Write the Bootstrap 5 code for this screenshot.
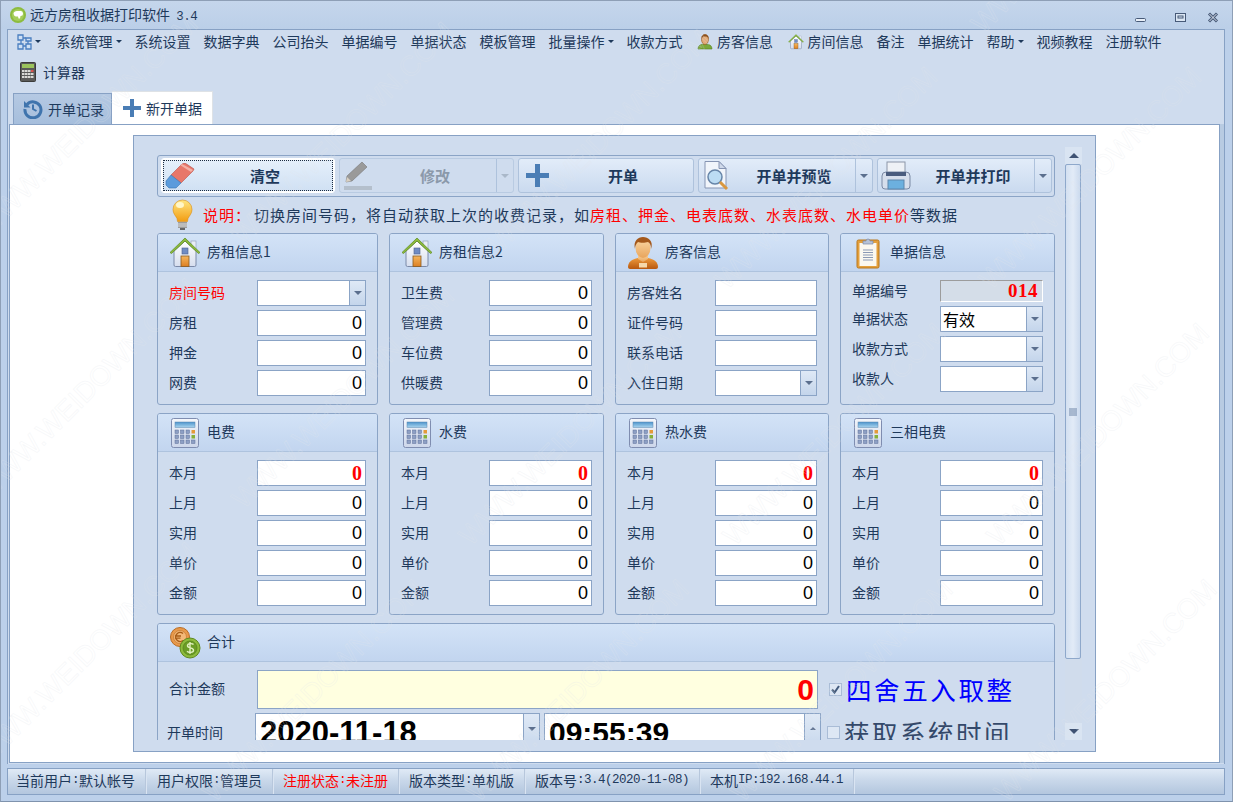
<!DOCTYPE html>
<html lang="zh-CN">
<head>
  <meta charset="UTF-8">
  <title>远方房租收据打印软件 3.4</title>
  <meta name="viewport" content="width=device-width, initial-scale=1">
  <link href="https://cdn.jsdelivr.net/npm/bootstrap@5.3.0/dist/css/bootstrap.min.css" rel="stylesheet">
  <style>
    html, body { margin: 0; height: 100%; overflow: hidden; }
    body { font-family: "Noto Sans CJK SC", "Liberation Sans", sans-serif; font-size: 14px; color: #1e395b; line-height: 1.2; }
    .app-win { position: relative; width: 1233px; height: 802px; overflow: hidden; background: #bcd0ea; border: 1px solid #8e9fb6; border-bottom-color: #7f93ad; }
    .halfw { font-family: "Liberation Mono", monospace; font-size: 12.5px; letter-spacing: -.5px; }

    .title-bar { height: 28px; padding-left: 9px; background: linear-gradient(#c5d6ec, #bbcfe8); }
    .title-bar .ttl { margin-left: 4px; margin-top: 1px; }
    .title-bar .ttl .halfw { margin-left: 3px; }
    .win-btns { margin-left: auto; gap: 21px; padding-right: 13px; padding-top: 5px; }

    .main-frame { margin: 0 7px 0 6px; height: 735px; background: #cfdcee; border: 1px solid #87a1c4; border-bottom: 0; }
    .menu-rows { padding-left: 2px; height: 59px; align-content: flex-start; }
    .menu-it { height: 25px; padding: 0 6.5px 2px; white-space: nowrap; color: #1e395b; text-decoration: none; gap: 4px; }
    .menu-it.with-ico { padding-left: 8px; }
    .menu-it.menu-grid { padding-right: 9.5px; }
    .menu-it.calc-it { height: 32px; margin-top: 2px; padding-left: 10px; gap: 7px; }
    .menu-it.dropdown-toggle { gap: 0; }
    .dropdown-toggle::after { border-width: 3px 3px 0; margin-left: 3px; vertical-align: 2px; border-top-color: #1e395b; }

    .tab-strip { margin: 2px 0 0 5px; height: 33px; border-bottom: 0; align-items: flex-end; }
    .tab-strip .nav-link { display: flex; align-items: center; gap: 5px; color: #1e395b; border: 1px solid #87a1c4; border-bottom: 0; border-radius: 0; margin: 0; padding: 0 0 0 9px; height: 31px; width: 99px; white-space: nowrap; background: linear-gradient(#b5c9e3, #a6bedc); }
    .tab-strip .nav-link.active { height: 33px; width: 101px; background: #fff; border-left: 0; color: #1e395b; padding-left: 11px; position: relative; z-index: 2; }

    .page-area { margin-left: 1px; margin-right: 4px; height: 639px; background: #fff; border: 1px solid #87a1c4; padding: 10px 0 0 123px; box-shadow: 4px 0 0 #b8cbe2; }
    .form-panel { width: 963px; height: 617px; background: #cfdcee; border: 1px solid #87a1c4; }
    .form-view { width: 931px; height: 604px; overflow: hidden; padding: 19px 0 0 23px; }
    .side-scroll { width: 17px; margin-top: 11px; height: 593px; background: #d0dcec; }
    .scroll-end { height: 17px; background: #d9e4f2; }
    .scroll-thumb { height: 495px; width: 16px; border: 1px solid #8ea8cb; border-radius: 2px; background: linear-gradient(90deg, #d3e0f1, #e2ebf7 50%, #cbdaee); }
    .tri-up { width: 0; height: 0; border: 5px solid transparent; border-top: 0; border-bottom: 5px solid #3f5273; }
    .tri-dn { width: 0; height: 0; border: 5px solid transparent; border-bottom: 0; border-top: 5px solid #3f5273; }
    .scroll-fill { flex: 1 1 auto; }

    .tool-row { width: 898px; height: 42px; border: 1px solid #8ba4c6; border-radius: 3px; padding: 2px 2px 0 3px; gap: 4px; }
    .tool-btn { --bs-btn-padding-x: 0; --bs-btn-padding-y: 0; width: 175px; height: 35px; padding: 0; border: 1px solid #aec2dc; border-radius: 3px; background: linear-gradient(#e2ecf9, #cadaef); color: #1e395b; font-size: 15px; font-weight: 700; line-height: 1; }
    .tool-btn.tool-wide { width: 176px; }
    .tool-btn:disabled { background: #cfdcee; border-color: #b9cbe2; color: #8b99aa; opacity: 1; }
    .tool-btn .ico-box { width: 36px; flex: none; display: flex; justify-content: center; align-items: center; }
    .tool-btn .lbl { flex: 1 1 auto; padding-right: 2px; }
    .tool-btn .drop-part { width: 17px; height: 100%; flex: none; border-left: 1px solid #aec2dc; display: flex; align-items: center; justify-content: center; }
    .tool-btn.is-focus { width: 174px; border-color: #fff; box-shadow: inset 0 0 0 1px #fff; position: relative; background: linear-gradient(#e6f0fb, #cfe0f3); }
    .tool-btn.is-focus::before { content: ""; position: absolute; inset: 1px; border: 1px dotted #1c2b40; }
    .tri-sm { width: 0; height: 0; border: 4px solid transparent; border-bottom: 0; border-top: 4px solid #5b6f8e; }
    .tool-btn:disabled .tri-sm { border-top-color: #aab8c9; }

    .hint-row { height: 36px; padding-left: 15px; font-size: 15px; letter-spacing: 1px; }
    .hint-red { color: #f00; }
    .hint-row .hint-lead { margin-left: 10px; width: 51px; }

    .group-grid { display: grid; grid-template-columns: 221px 215px 214px 215px; gap: 8px 11px; width: 898px; }
    .info-box { --bs-card-border-color: #8ba4c6; --bs-card-border-radius: 3px; --bs-card-inner-border-radius: 2px; --bs-card-bg: transparent; --bs-card-spacer-y: 0; --bs-card-spacer-x: 0; --bs-card-cap-padding-y: 0; --bs-card-cap-padding-x: 0; --bs-card-color: #1e395b; }
    .info-box .card-header { flex: none; height: 38px; display: flex; align-items: center; gap: 6px; padding-left: 11px; background: linear-gradient(#d3e3f7, #c2d5ef); border-bottom: 1px solid #aec3de; }
    .info-box .card-header svg { flex: none; }
    .info-box .card-header span { padding-bottom: 2px; }
    .info-box .card-body { padding: 8px 11px 8px 11px; display: flex; flex-direction: column; gap: 4px; }
    .rent-box { height: 172px; }
    .meter-box { height: 202px; }
    .sum-box { grid-column: 1 / -1; height: 140px; }
    .f-row { height: 26px; flex: none; display: flex; align-items: center; }
    .f-lbl { flex: none; white-space: nowrap; padding-bottom: 2px; }
    .lbl-88 { width: 88px; }
    .f-red { color: #f00; }
    .f-input { flex: 1 1 auto; width: 0; min-height: 0; height: 26px; border: 1px solid #8ba4c6; border-radius: 0; background: #fff; padding: 0 3px; color: #000; font-family: "Liberation Sans", sans-serif; font-size: 18px; text-align: right; box-shadow: none; }
    .f-input.num-red { color: #f00; font-family: "Liberation Serif", serif; font-weight: 700; font-size: 20px; }
    .f-input.txt { text-align: left; font-family: "Noto Sans CJK SC", sans-serif; font-size: 16px; padding-left: 2px; }
    .combo { flex: 1 1 auto; width: 0; flex-wrap: nowrap; }
    .combo .f-input { border-right: 0; border-radius: 0 !important; }
    .combo-btn { width: 17px; height: 26px; padding: 0; flex: none; border: 1px solid #8ba4c6; border-radius: 0 !important; background: linear-gradient(#dfe9f6, #c4d5eb); display: flex; align-items: center; justify-content: center; }
    .no-box { height: 22px; margin-bottom: 0; }
    .no-input { flex: 1 1 auto; height: 22px; background: #d4dde8; border: 1px solid #fff; border-top-color: #9c9c9c; border-left-color: #9c9c9c; color: #f00; font-family: "Liberation Serif", serif; font-weight: 700; font-size: 19px; letter-spacing: .5px; line-height: 20px; text-align: right; padding-right: 4px; }

    .sum-body-row { height: 39px; }
    .sum-input { width: 561px; flex: none; height: 39px; background: #ffffe0; color: #f00; font-weight: 700; font-size: 30px; font-family: "Liberation Sans", sans-serif; padding-right: 3px; }
    .sum-lbl { width: 88px; }
    .form-check-input.chk-mark { width: 13px; height: 13px; margin: 0; flex: none; border-radius: 0; border-color: #a9bcd6; background-color: #dde7f4; }
    .form-check-input.chk-mark:checked { background-color: #dde7f4; border-color: #a9bcd6; background-size: 13px; background-image: url("data:image/svg+xml,%3csvg xmlns='http://www.w3.org/2000/svg' viewBox='0 0 13 13'%3e%3cpath fill='none' stroke='%23425a7c' stroke-width='2' d='M3 6.5l2.5 3L10 3'/%3e%3c/svg%3e"); }
    .round-note { margin-left: 11px; gap: 4px; color: #00f; font-size: 25.5px; letter-spacing: 2.6px; white-space: nowrap; }
    .date-row { margin-left: -2px; height: 40px; align-items: flex-start; }
    .date-lbl { width: 88px; margin-top: 11px; }
    .date-box { width: 285px; flex: none; }
    .time-box { width: 277px; flex: none; margin-left: 4px; }
    .date-box .f-input, .time-box .f-input { height: 40px; font-size: 30px; font-weight: 700; text-align: left; padding-left: 4px; line-height: 1; }
    .date-box .f-input { font-size: 31px; }
    .date-box .combo-btn, .time-box .combo-btn { height: 40px; align-items: flex-start; padding-top: 13px; }
    .sys-note { margin-left: 6px; margin-top: 5px; gap: 4px; color: #34496a; font-size: 25.5px; letter-spacing: 2.5px; white-space: nowrap; line-height: 1.1; }
    .spin-up { width: 0; height: 0; border: 3px solid transparent; border-top: 0; border-bottom: 3px solid #5b6f8e; }

    .status-bar { margin: 4px 7px 0 6px; height: 27px; background: linear-gradient(#e0eaf6, #c9d8ea 45%, #b3c6de); border: 1px solid #87a1c4; }
    .st-it { padding: 0 10px 2px 8px; height: 100%; display: flex; align-items: center; white-space: nowrap; border-right: 1px solid #b7c7dc; box-shadow: 1px 0 0 #d9e4f2; margin-right: 2px; }
    .st-it:first-child { margin-right: 3px; }
    .st-it.st-red { color: #f00; }

    .wm-layer { position: absolute; inset: 0; pointer-events: none; overflow: hidden; z-index: 5; }
    .wm-line { position: absolute; white-space: pre; transform-origin: 0 50%; transform: rotate(-45deg); font: 400 28px "Liberation Sans", sans-serif; color: transparent; -webkit-text-stroke: .8px rgba(226,230,236,.28); }
  </style>
</head>
<body>

<svg width="0" height="0" class="position-absolute">
  <defs>
    <linearGradient id="gCalc" x1="0" y1="0" x2="0" y2="1"><stop offset="0" stop-color="#f4f7fc"/><stop offset="1" stop-color="#ccd6ea"/></linearGradient>
    <linearGradient id="gDisp" x1="0" y1="0" x2="0" y2="1"><stop offset="0" stop-color="#4d94cc"/><stop offset="1" stop-color="#a9d4ee"/></linearGradient>
    <linearGradient id="gDoor" x1="0" y1="0" x2="0" y2="1"><stop offset="0" stop-color="#f5b65c"/><stop offset="1" stop-color="#dd7f22"/></linearGradient>
    <linearGradient id="gWall" x1="0" y1="0" x2="0" y2="1"><stop offset="0" stop-color="#fff"/><stop offset="1" stop-color="#d6deee"/></linearGradient>
    <linearGradient id="gBulb" x1="0" y1="0" x2="0" y2="1"><stop offset="0" stop-color="#ffe680"/><stop offset="1" stop-color="#f29c12"/></linearGradient>
    <linearGradient id="gSkin" x1="0" y1="0" x2="0" y2="1"><stop offset="0" stop-color="#fbd9a5"/><stop offset="1" stop-color="#e8a45c"/></linearGradient>
    <linearGradient id="gOrange" x1="0" y1="0" x2="0" y2="1"><stop offset="0" stop-color="#ee9a3c"/><stop offset="1" stop-color="#b8580f"/></linearGradient>

    <symbol id="icHome" viewBox="0 0 32 32">
      <rect x="22" y="4" width="5" height="9" fill="#e8edf6" stroke="#8b9ab6" stroke-width=".6"/>
      <path d="M5 14L16 4l11 10v14a1.5 1.5 0 0 1-1.5 1.5h-19A1.5 1.5 0 0 1 5 28z" fill="url(#gWall)" stroke="#7b8aa8"/>
      <path d="M1 15.5L16 1l15 14.5-1.5 1L16 4 2.500 16.500z" fill="#8dbb3c" stroke="#5c8a1e" stroke-width=".7"/>
      <rect x="13" y="11" width="6" height="6" fill="#6f8cc4" stroke="#4d628e" stroke-width=".6"/>
      <rect x="12" y="19" width="8" height="10.500" fill="url(#gDoor)" stroke="#8a5a1e" stroke-width=".8"/>
    </symbol>
    <symbol id="icPerson" viewBox="0 0 32 32">
      <path d="M1 30c0-5 4-8 10-9h10c6 1 10 4 10 9 0 1-1 2-2 2H3c-1 0-2-1-2-2z" fill="url(#gOrange)"/>
      <path d="M11 17h10v5l-5 3-5-3z" fill="url(#gSkin)"/>
      <ellipse cx="16" cy="11" rx="7.500" ry="10" fill="url(#gSkin)"/>
      <path d="M8 12C6 4 11 0 16 0s11 4 8 12c0-4-1-6-3-7-3 1-8 1-10 0-2 2-3 4-3 7z" fill="#a5591b"/>
      <rect x="12" y="26" width="8" height="4.500" fill="#f6d8aa"/>
    </symbol>
    <symbol id="icClip" viewBox="0 0 24 32">
      <rect x="1" y="3" width="22" height="28" rx="1.500" fill="#e4a03c" stroke="#b9771d"/>
      <rect x="3.500" y="6" width="17" height="23" fill="#fbf8f0"/>
      <path d="M7 13h10M7 15.500h10M7 18h10M7 20.500h10M7 23h10" stroke="#8b99b5" stroke-width="1"/>
      <path d="M7 7V4h3a2 2 0 0 1 4 0h3v3z" fill="#b6c2d8" stroke="#7d8ba6" stroke-width=".7"/>
    </symbol>
    <symbol id="icCalcBlue" viewBox="0 0 28 30">
      <rect x=".5" y=".5" width="27" height="29" rx="2" fill="url(#gCalc)" stroke="#7f8db0"/>
      <rect x="4" y="4" width="20" height="5.500" fill="url(#gDisp)" stroke="#5d87b0" stroke-width=".5"/>
      <g fill="#8d9fc4" stroke="#5f7099" stroke-width=".5">
        <rect x="4" y="12" width="3.500" height="3.500"/><rect x="9.500" y="12" width="3.500" height="3.500"/><rect x="15" y="12" width="3.500" height="3.500"/>
        <rect x="4" y="17" width="3.500" height="3.500"/><rect x="9.500" y="17" width="3.500" height="3.500"/><rect x="15" y="17" width="3.500" height="3.500"/>
        <rect x="4" y="22" width="3.500" height="3.500"/><rect x="9.500" y="22" width="3.500" height="3.500"/><rect x="15" y="22" width="3.500" height="3.500"/><rect x="20.500" y="22" width="3.500" height="3.500"/>
      </g>
      <rect x="20.500" y="12" width="3.500" height="3.500" fill="#e49a3a"/>
      <rect x="20.500" y="17" width="3.500" height="3.500" fill="#86b03a"/>
    </symbol>
    <symbol id="icCoins" viewBox="0 0 32 32">
      <circle cx="11" cy="10" r="9.500" fill="#e8994a" stroke="#b96c24"/>
      <circle cx="11" cy="10" r="6.500" fill="#f3b878" stroke="#c27a34" stroke-width=".7"/>
      <path d="M14 6.500a4.500 4.500 0 1 0 0 7M6 9h6M6 11.200h5.500" fill="none" stroke="#a85c16" stroke-width="1.300"/>
      <circle cx="21" cy="21" r="10" fill="#8dbb3c" stroke="#5f8a1e"/>
      <circle cx="21" cy="21" r="7" fill="#6b9c26" stroke="#55801a" stroke-width=".7"/>
      <path d="M24.500 17.500c-1-1.200-6-1.500-6 1.200s6 1.800 6 4.600-5 2.500-6.500 1M21 15v12" fill="none" stroke="#e3f0c0" stroke-width="1.400"/>
    </symbol>
  </defs>
</svg>

<div class="app-win">
  <div class="title-bar d-flex align-items-center">
    <svg width="16" height="16" viewBox="0 0 16 16"><circle cx="8" cy="8" r="8" fill="#8cbc3f"/><circle cx="8" cy="8" r="6" fill="#a5cd5c"/><path d="M3.500 6.500Q4 4 7 4h4q2 0 2 2.500T10.500 9l-.5 2.500H8.500L8 9.500H6Q4 9.500 3.500 6.500z" fill="#fff"/></svg>
    <span class="ttl">远方房租收据打印软件 <span class="halfw">3.4</span></span>
    <div class="win-btns d-flex align-items-center">
      <svg class="me-2" width="11" height="11" viewBox="0 0 11 11"><rect x=".5" y="6.500" width="10" height="3" rx="1" fill="#e8eff8" stroke="#475a78"/></svg>
      <svg width="11" height="11" viewBox="0 0 11 11"><rect x=".5" y="1.500" width="10" height="8" fill="#dbe6f3" stroke="#475a78"/><rect x="3" y="4" width="5" height="2" fill="none" stroke="#475a78"/></svg>
      <svg width="12" height="11" viewBox="0 0 12 11"><path d="M2 1.500l8 8M10 1.500l-8 8" fill="none" stroke="#475a78" stroke-width="3"/><path d="M2.500 2l7 7M9.500 2l-7 7" stroke="#eef3fa" stroke-width=".9"/></svg>
    </div>
  </div>

  <div class="main-frame">
    <div class="menu-rows d-flex flex-wrap">
      <a class="menu-it menu-grid d-flex align-items-center dropdown-toggle" href="#">
        <svg width="15" height="16" viewBox="0 0 15 16"><path d="M1 1h5v5H1zM1 10h5v5H1zM9 10h5v5H9zM9 4h5v3H9z" fill="#cfe0f4" stroke="#4a7ec0" stroke-width="1.300"/><path d="M6 4h3M4 6v4M6 12h3M11 7v3" stroke="#4a7ec0" stroke-width="1.300"/></svg>
      </a>
      <a class="menu-it d-flex align-items-center dropdown-toggle" href="#">系统管理</a>
      <a class="menu-it d-flex align-items-center" href="#">系统设置</a>
      <a class="menu-it d-flex align-items-center" href="#">数据字典</a>
      <a class="menu-it d-flex align-items-center" href="#">公司抬头</a>
      <a class="menu-it d-flex align-items-center" href="#">单据编号</a>
      <a class="menu-it d-flex align-items-center" href="#">单据状态</a>
      <a class="menu-it d-flex align-items-center" href="#">模板管理</a>
      <a class="menu-it d-flex align-items-center dropdown-toggle" href="#">批量操作</a>
      <a class="menu-it d-flex align-items-center" href="#">收款方式</a>
      <a class="menu-it with-ico d-flex align-items-center" href="#">
        <svg width="16" height="16" viewBox="0 0 16 16"><path d="M1 15c0-3 2-4.500 5-5h4c3 .5 5 2 5 5z" fill="#7aa83a" stroke="#54801e" stroke-width=".6"/><ellipse cx="8" cy="5.500" rx="3.500" ry="5" fill="#e2ab78" stroke="#98602c" stroke-width=".7"/><path d="M4.500 5C4 1 7 .5 8 .5S12 1 11.500 5C11 3 10 2.500 8 2.500S5 3 4.500 5z" fill="#8a4f1c"/></svg>
        <span>房客信息</span>
      </a>
      <a class="menu-it with-ico d-flex align-items-center" href="#">
        <svg width="16" height="16" viewBox="0 0 32 32"><use href="#icHome"/></svg>
        <span>房间信息</span>
      </a>
      <a class="menu-it d-flex align-items-center" href="#">备注</a>
      <a class="menu-it d-flex align-items-center" href="#">单据统计</a>
      <a class="menu-it d-flex align-items-center dropdown-toggle" href="#">帮助</a>
      <a class="menu-it d-flex align-items-center" href="#">视频教程</a>
      <a class="menu-it d-flex align-items-center" href="#">注册软件</a>
      <a class="menu-it calc-it d-flex align-items-center" href="#">
        <svg width="16" height="20" viewBox="0 0 16 20"><rect x=".5" y=".5" width="15" height="19" rx="1" fill="#5a5a58" stroke="#3c3c3a"/><rect x="2" y="2" width="12" height="4" fill="#9bc35c"/><g fill="#d8d8d4"><rect x="2" y="8" width="2.500" height="2"/><rect x="5" y="8" width="2.500" height="2"/><rect x="8" y="8" width="2.500" height="2"/><rect x="11" y="8" width="2.500" height="2" fill="#d9534f"/><rect x="2" y="11" width="2.500" height="2"/><rect x="5" y="11" width="2.500" height="2"/><rect x="8" y="11" width="2.500" height="2"/><rect x="11" y="11" width="2.500" height="2"/><rect x="2" y="14" width="2.500" height="2"/><rect x="5" y="14" width="2.500" height="2"/><rect x="8" y="14" width="2.500" height="2"/><rect x="11" y="14" width="2.500" height="2"/></g></svg>
        <span>计算器</span>
      </a>
    </div>

    <ul class="nav nav-tabs tab-strip">
      <li class="nav-item">
        <a class="nav-link" href="#">
          <svg width="20" height="20" viewBox="0 0 20 20"><path d="M4 5.500A8 8 0 1 1 2 10" fill="none" stroke="#3f74ad" stroke-width="3"/><path d="M1 2v6.500h6.500z" fill="#3f74ad"/><path d="M10 5.500V10l3.500 2" fill="none" stroke="#3f74ad" stroke-width="2"/></svg>
          <span>开单记录</span>
        </a>
      </li>
      <li class="nav-item">
        <a class="nav-link active" href="#">
          <svg width="18" height="18" viewBox="0 0 18 18"><path d="M7 0h4v7h7v4h-7v7H7v-7H0V7h7z" fill="#4a7db5"/></svg>
          <span>新开单据</span>
        </a>
      </li>
    </ul>

    <div class="page-area">
      <div class="form-panel d-flex">
        <div class="form-view">
          <div class="tool-row d-flex">
            <button class="btn tool-btn is-focus d-flex align-items-center" type="button">
              <span class="ico-box"><svg width="30" height="26" viewBox="0 0 30 26"><path d="M17 1l3-1 9 6-1 2-12 12-10-8z" fill="#e8776a" stroke="#b9534a" stroke-width=".6"/><path d="M17 1l11 6-2 2-11-7z" fill="#f4b0a6"/><path d="M6 12l10 8-5 5H4l-3-3v-4z" fill="#5b9bdc" stroke="#3b75b2" stroke-width=".6"/></svg></span>
              <span class="lbl">清空</span>
            </button>
            <button class="btn tool-btn d-flex align-items-center" type="button" disabled>
              <span class="ico-box"><svg width="30" height="30" viewBox="0 0 30 30"><path d="M3 21l1-6L19 1l5 5L9 20z" fill="#9a9a9a" stroke="#777" stroke-width=".6"/><path d="M3 21l1-5 4 4z" fill="#d9d0c2"/><rect x="1" y="25" width="28" height="4" fill="#b4bfcc"/></svg></span>
              <span class="lbl">修改</span>
              <span class="drop-part"><span class="tri-sm"></span></span>
            </button>
            <button class="btn tool-btn tool-wide d-flex align-items-center" type="button">
              <span class="ico-box"><svg width="23" height="23" viewBox="0 0 23 23"><path d="M9 0h5v9h9v5h-9v9H9v-9H0V9h9z" fill="#4a7db5"/></svg></span>
              <span class="lbl">开单</span>
            </button>
            <button class="btn tool-btn d-flex align-items-center" type="button">
              <span class="ico-box"><svg width="26" height="30" viewBox="0 0 26 30"><path d="M1 .5h14l7 7V27H1z" fill="#f1f5fb" stroke="#8695b3"/><path d="M15 .5v7h7z" fill="#cfd9ea" stroke="#8695b3"/><circle cx="11" cy="16" r="7" fill="#bcdcf3" stroke="#6785a8" stroke-width="1.500"/><path d="M16 21l7 7" stroke="#d99840" stroke-width="3"/></svg></span>
              <span class="lbl">开单并预览</span>
              <span class="drop-part"><span class="tri-sm"></span></span>
            </button>
            <button class="btn tool-btn d-flex align-items-center" type="button">
              <span class="ico-box"><svg width="30" height="30" viewBox="0 0 30 30"><rect x="6" y="1" width="18" height="12" fill="#eef1f6" stroke="#8b96a8"/><path d="M1 15q0-4 4-4h20q4 0 4 4v10q0 3-3 3H4q-3 0-3-3z" fill="#d6deec" stroke="#7b89a4"/><rect x="5" y="11" width="20" height="4" fill="#4a5c7e"/><rect x="7" y="19" width="16" height="9" fill="#6cb0df" stroke="#5c86ac"/></svg></span>
              <span class="lbl">开单并打印</span>
              <span class="drop-part"><span class="tri-sm"></span></span>
            </button>
          </div>

          <div class="hint-row d-flex align-items-center">
            <svg width="21" height="32" viewBox="0 0 21 32"><path d="M10.500 1a9.500 9.500 0 0 1 9.500 9.500c0 4-2.500 6-4 9l-.5 3h-10l-.5-3c-1.500-3-4-5-4-9A9.500 9.500 0 0 1 10.500 1z" fill="url(#gBulb)" stroke="#d98f18" stroke-width=".6"/><ellipse cx="8" cy="6" rx="4" ry="3" fill="#fff6c8"/><rect x="6" y="23" width="9" height="6" fill="#9b9b9b"/><path d="M6 25h9M6 27h9" stroke="#dcdcdc"/><rect x="8" y="29" width="5" height="2" fill="#666"/></svg>
            <span class="hint-lead hint-red">说明：</span>
            <span>切换房间号码，将自动获取上次的收费记录，如<span class="hint-red">房租、押金、电表底数、水表底数、水电单价</span>等数据</span>
          </div>

          <div class="group-grid">
            <div class="card info-box rent-box">
              <div class="card-header"><svg width="32" height="32"><use href="#icHome"/></svg><span>房租信息1</span></div>
              <div class="card-body">
                <div class="f-row"><span class="f-lbl lbl-88 f-red">房间号码</span>
                  <div class="input-group combo"><input class="form-control f-input" type="text"><button class="btn combo-btn" type="button"><span class="tri-sm"></span></button></div></div>
                <div class="f-row"><span class="f-lbl lbl-88">房租</span><input class="form-control f-input" type="text" value="0"></div>
                <div class="f-row"><span class="f-lbl lbl-88">押金</span><input class="form-control f-input" type="text" value="0"></div>
                <div class="f-row"><span class="f-lbl lbl-88">网费</span><input class="form-control f-input" type="text" value="0"></div>
              </div>
            </div>
            <div class="card info-box rent-box">
              <div class="card-header"><svg width="32" height="32"><use href="#icHome"/></svg><span>房租信息2</span></div>
              <div class="card-body">
                <div class="f-row"><span class="f-lbl lbl-88">卫生费</span><input class="form-control f-input" type="text" value="0"></div>
                <div class="f-row"><span class="f-lbl lbl-88">管理费</span><input class="form-control f-input" type="text" value="0"></div>
                <div class="f-row"><span class="f-lbl lbl-88">车位费</span><input class="form-control f-input" type="text" value="0"></div>
                <div class="f-row"><span class="f-lbl lbl-88">供暖费</span><input class="form-control f-input" type="text" value="0"></div>
              </div>
            </div>
            <div class="card info-box rent-box">
              <div class="card-header"><svg width="32" height="32"><use href="#icPerson"/></svg><span>房客信息</span></div>
              <div class="card-body">
                <div class="f-row"><span class="f-lbl lbl-88">房客姓名</span><input class="form-control f-input" type="text"></div>
                <div class="f-row"><span class="f-lbl lbl-88">证件号码</span><input class="form-control f-input" type="text"></div>
                <div class="f-row"><span class="f-lbl lbl-88">联系电话</span><input class="form-control f-input" type="text"></div>
                <div class="f-row"><span class="f-lbl lbl-88">入住日期</span>
                  <div class="input-group combo"><input class="form-control f-input" type="text"><button class="btn combo-btn" type="button"><span class="tri-sm"></span></button></div></div>
              </div>
            </div>
            <div class="card info-box rent-box">
              <div class="card-header"><svg width="32" height="32"><use href="#icClip"/></svg><span>单据信息</span></div>
              <div class="card-body">
                <div class="f-row no-box"><span class="f-lbl lbl-88">单据编号</span><div class="no-input">014</div></div>
                <div class="f-row"><span class="f-lbl lbl-88">单据状态</span>
                  <div class="input-group combo"><input class="form-control f-input txt" type="text" value="有效"><button class="btn combo-btn" type="button"><span class="tri-sm"></span></button></div></div>
                <div class="f-row"><span class="f-lbl lbl-88">收款方式</span>
                  <div class="input-group combo"><input class="form-control f-input" type="text"><button class="btn combo-btn" type="button"><span class="tri-sm"></span></button></div></div>
                <div class="f-row"><span class="f-lbl lbl-88">收款人</span>
                  <div class="input-group combo"><input class="form-control f-input" type="text"><button class="btn combo-btn" type="button"><span class="tri-sm"></span></button></div></div>
              </div>
            </div>

            <div class="card info-box meter-box">
              <div class="card-header"><svg width="32" height="30"><use href="#icCalcBlue"/></svg><span>电费</span></div>
              <div class="card-body">
                <div class="f-row"><span class="f-lbl lbl-88">本月</span><input class="form-control f-input num-red" type="text" value="0"></div>
                <div class="f-row"><span class="f-lbl lbl-88">上月</span><input class="form-control f-input" type="text" value="0"></div>
                <div class="f-row"><span class="f-lbl lbl-88">实用</span><input class="form-control f-input" type="text" value="0"></div>
                <div class="f-row"><span class="f-lbl lbl-88">单价</span><input class="form-control f-input" type="text" value="0"></div>
                <div class="f-row"><span class="f-lbl lbl-88">金额</span><input class="form-control f-input" type="text" value="0"></div>
              </div>
            </div>
            <div class="card info-box meter-box">
              <div class="card-header"><svg width="32" height="30"><use href="#icCalcBlue"/></svg><span>水费</span></div>
              <div class="card-body">
                <div class="f-row"><span class="f-lbl lbl-88">本月</span><input class="form-control f-input num-red" type="text" value="0"></div>
                <div class="f-row"><span class="f-lbl lbl-88">上月</span><input class="form-control f-input" type="text" value="0"></div>
                <div class="f-row"><span class="f-lbl lbl-88">实用</span><input class="form-control f-input" type="text" value="0"></div>
                <div class="f-row"><span class="f-lbl lbl-88">单价</span><input class="form-control f-input" type="text" value="0"></div>
                <div class="f-row"><span class="f-lbl lbl-88">金额</span><input class="form-control f-input" type="text" value="0"></div>
              </div>
            </div>
            <div class="card info-box meter-box">
              <div class="card-header"><svg width="32" height="30"><use href="#icCalcBlue"/></svg><span>热水费</span></div>
              <div class="card-body">
                <div class="f-row"><span class="f-lbl lbl-88">本月</span><input class="form-control f-input num-red" type="text" value="0"></div>
                <div class="f-row"><span class="f-lbl lbl-88">上月</span><input class="form-control f-input" type="text" value="0"></div>
                <div class="f-row"><span class="f-lbl lbl-88">实用</span><input class="form-control f-input" type="text" value="0"></div>
                <div class="f-row"><span class="f-lbl lbl-88">单价</span><input class="form-control f-input" type="text" value="0"></div>
                <div class="f-row"><span class="f-lbl lbl-88">金额</span><input class="form-control f-input" type="text" value="0"></div>
              </div>
            </div>
            <div class="card info-box meter-box">
              <div class="card-header"><svg width="32" height="30"><use href="#icCalcBlue"/></svg><span>三相电费</span></div>
              <div class="card-body">
                <div class="f-row"><span class="f-lbl lbl-88">本月</span><input class="form-control f-input num-red" type="text" value="0"></div>
                <div class="f-row"><span class="f-lbl lbl-88">上月</span><input class="form-control f-input" type="text" value="0"></div>
                <div class="f-row"><span class="f-lbl lbl-88">实用</span><input class="form-control f-input" type="text" value="0"></div>
                <div class="f-row"><span class="f-lbl lbl-88">单价</span><input class="form-control f-input" type="text" value="0"></div>
                <div class="f-row"><span class="f-lbl lbl-88">金额</span><input class="form-control f-input" type="text" value="0"></div>
              </div>
            </div>

            <div class="card info-box sum-box">
              <div class="card-header"><svg width="32" height="32"><use href="#icCoins"/></svg><span>合计</span></div>
              <div class="card-body">
                <div class="f-row sum-body-row">
                  <span class="f-lbl sum-lbl">合计金额</span>
                  <input class="form-control f-input sum-input" type="text" value="0">
                  <div class="round-note d-flex align-items-center">
                    <input class="form-check-input chk-mark" type="checkbox" checked>
                    <span>四舍五入取整</span>
                  </div>
                </div>
                <div class="f-row date-row">
                  <span class="f-lbl date-lbl">开单时间</span>
                  <div class="input-group combo date-box"><input class="form-control f-input" type="text" value="2020-11-18"><button class="btn combo-btn" type="button"><span class="tri-sm"></span></button></div>
                  <div class="input-group combo time-box"><input class="form-control f-input" type="text" value="09:55:39"><button class="btn combo-btn" type="button"><span class="spin-up"></span></button></div>
                  <div class="sys-note d-flex align-items-center">
                    <input class="form-check-input chk-mark" type="checkbox">
                    <span>获取系统时间</span>
                  </div>
                </div>
              </div>
            </div>
          </div>
        </div>

        <div class="side-scroll d-flex flex-column">
          <div class="scroll-end d-flex align-items-center justify-content-center"><span class="tri-up"></span></div>
          <div class="scroll-thumb d-flex align-items-center justify-content-center">
            <svg width="8" height="8" viewBox="0 0 8 8"><path d="M0 1h8M0 3h8M0 5h8M0 7h8" stroke="#6f86a8"/></svg>
          </div>
          <div class="scroll-fill"></div>
          <div class="scroll-end d-flex align-items-center justify-content-center"><span class="tri-dn"></span></div>
        </div>
      </div>
    </div>
  </div>

  <div class="status-bar d-flex align-items-center">
    <div class="st-it">当前用户<span class="halfw">:</span>默认帐号</div>
    <div class="st-it">用户权限<span class="halfw">:</span>管理员</div>
    <div class="st-it st-red">注册状态<span class="halfw">:</span>未注册</div>
    <div class="st-it">版本类型<span class="halfw">:</span>单机版</div>
    <div class="st-it">版本号<span class="halfw">:3.4(2020-11-08)</span></div>
    <div class="st-it">本机<span class="halfw">IP:192.168.44.1</span></div>
  </div>

  <div class="wm-layer" id="wmLayer"></div>
</div>

<script src="https://cdn.jsdelivr.net/npm/bootstrap@5.3.0/dist/js/bootstrap.bundle.min.js"></script>
<script>
  // faint diagonal watermark, lines every 264px along x+y
  const wm = document.getElementById("wmLayer");
  const wmText = "WWW.WEIDOWN.COM        ";
  for (let c = 215; c < 2100; c += 264) {
    const line = document.createElement("div");
    line.className = "wm-line";
    line.textContent = wmText.repeat(6);
    line.style.left = Math.max(-20, c - 800) + "px";
    line.style.top = (c - Math.max(-20, c - 800) - 20) + "px";
    wm.appendChild(line);
  }
</script>
</body>
</html>
